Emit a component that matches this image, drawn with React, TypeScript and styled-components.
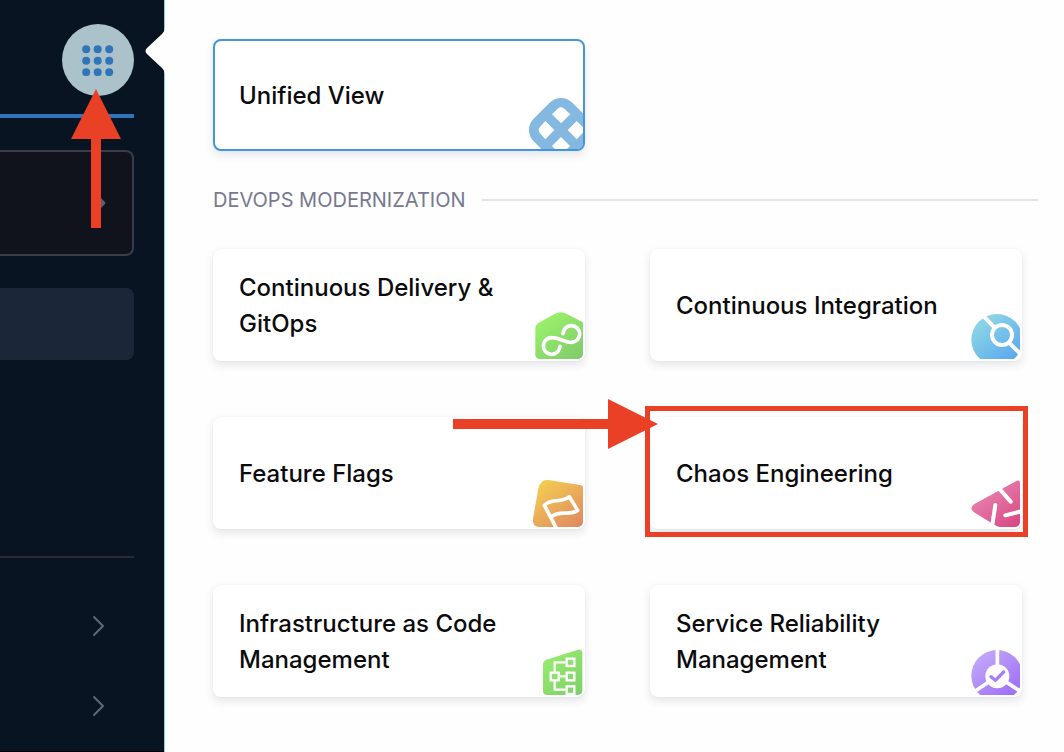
import React from "react";
import styled, { createGlobalStyle } from "styled-components";

const RED = "#ea4026";

const GlobalStyle = createGlobalStyle`
  *, *::before, *::after { box-sizing: border-box; }
  body {
    margin: 0;
    background: #fefefe;
    font-family: Inter, "Liberation Sans", sans-serif;
  }
  button { font: inherit; color: inherit; cursor: pointer; }
`;

const Page = styled.div`
  display: flex;
  height: 100vh;
  overflow: hidden;
`;

const Sidebar = styled.nav`
  flex: 0 0 164px;
  display: flex;
  flex-direction: column;
  padding-right: 30px;
  background: #081421;
  border-bottom: 1px solid #000;
`;

const SidebarHeader = styled.div`
  display: flex;
  justify-content: flex-end;
  padding: 24px 0 18px;
  border-bottom: 4px solid #3075b8;
`;

const ModuleButton = styled.button`
  position: relative;
  width: 72px;
  height: 72px;
  padding: 0;
  border: 0;
  border-radius: 50%;
  background: #abc2ca;
  display: grid;
  place-items: center;
`;

const ProjectButton = styled.button`
  display: flex;
  align-items: center;
  justify-content: flex-end;
  height: 106px;
  margin-top: 32px;
  padding: 0 26px 0 0;
  background: #10131c;
  border: 2px solid #3a3c4a;
  border-left: 0;
  border-radius: 0 8px 8px 0;
`;

const ActiveItem = styled.button`
  height: 72px;
  margin-top: 32px;
  padding: 0;
  border: 0;
  border-radius: 0 8px 8px 0;
  background: #1b2739;
`;

const SetupList = styled.div`
  display: flex;
  flex-direction: column;
  margin-top: 196px;
  padding-top: 28px;
  border-top: 2px solid #2a2b35;
`;

const SetupItem = styled.button`
  display: flex;
  align-items: center;
  justify-content: flex-end;
  height: 80px;
  padding: 0 28px 0 0;
  border: 0;
  background: none;
`;

const Panel = styled.main`
  position: relative;
  flex: 1;
  min-width: 0;
  padding: 39px 26px 0 48px;
  border-left: 1px solid #8fc9e6;
  background: #fefefe;
`;

const PanelTip = styled.svg`
  position: absolute;
  left: -20px;
  top: 28px;
`;

const Grid = styled.div`
  display: grid;
  grid-template-columns: repeat(2, minmax(0, 1fr));
  gap: 56px 65px;
  padding-right: 16px;
`;

const Cell = styled.div`
  position: relative;
`;

const Card = styled.button<{ $selected?: boolean }>`
  position: relative;
  display: flex;
  align-items: center;
  width: 100%;
  height: 112px;
  padding: 2px 48px 0 24px;
  text-align: left;
  font-size: 24px;
  font-weight: 500;
  line-height: 36px;
  color: #0b0b0d;
  background: #fff;
  border: 2px solid ${(p) => (p.$selected ? "#4595de" : "#fff")};
  border-radius: 8px;
  box-shadow: 0 0 2px rgba(40, 41, 61, 0.05), 0 4px 8px rgba(96, 97, 112, 0.16);
`;

const CardIcon = styled.svg`
  position: absolute;
  right: 0;
  bottom: 0;
  width: 56px;
  height: 56px;
  border-bottom-right-radius: 5px;
`;

const SectionTitle = styled.h2`
  display: flex;
  align-items: center;
  gap: 16px;
  margin: 34px 0;
  font-size: 20px;
  font-weight: 400;
  line-height: 30px;
  color: #777990;
  white-space: nowrap;

  &::after {
    content: "";
    flex: 1;
    height: 2px;
    background: #e3e4ea;
  }
`;

const Highlight = styled.div`
  position: absolute;
  inset: -11px -6px -8px -5px;
  border: 5px solid ${RED};
  pointer-events: none;
`;

const ArrowRight = styled.svg`
  position: absolute;
  left: -197px;
  top: -18px;
  pointer-events: none;
`;

const ArrowUp = styled.svg`
  position: absolute;
  left: 9px;
  top: 65px;
  z-index: 1;
  pointer-events: none;
`;

const Chevron = () => (
  <svg width="14" height="22" viewBox="0 0 14 22" fill="none" aria-hidden="true">
    <path d="M2 2l9 9-9 9" stroke="#62657a" strokeWidth="2" strokeLinecap="round" strokeLinejoin="round" />
  </svg>
);

type GradientProps = { id: string; from: string; to: string };
const Gradient = ({ id, from, to }: GradientProps) => (
  <defs>
    <linearGradient id={id} x1="0.1" y1="0" x2="0.9" y2="1">
      <stop offset="0" stopColor={from} />
      <stop offset="1" stopColor={to} />
    </linearGradient>
  </defs>
);

const UnifiedIcon = () => (
  <CardIcon viewBox="51 39 168 168" aria-hidden="true">
    <rect x="71" y="68" width="164" height="164" rx="48" transform="rotate(45 153 150)" fill="#84b8e0" />
    <g fill="#fff">
      <path d="M153 130L126 103L143 86Q153 78 163 86L181 103Z" />
      <path d="M133 150L106 123L90 140Q82 150 90 160L106 178Z" />
      <path d="M173 150L200 123L227 150L200 178Z" />
      <path d="M153 171L126 198L153 225L180 198Z" />
    </g>
  </CardIcon>
);

const DeliveryIcon = () => (
  <CardIcon viewBox="21 9 168 168" aria-hidden="true">
    <Gradient id="cd" from="#9df56b" to="#7fcb6b" />
    <path d="M46 86Q46 74 56 68L108 40Q122 33 136 40L189 67V177H60Q46 177 46 163Z" fill="url(#cd)" />
    <path
      d="M129 101A25 25 0 1 1 155 127C135 127 115 113 97 113A25 25 0 1 0 120 139"
      fill="none"
      stroke="#fff"
      strokeWidth="11"
      strokeLinecap="round"
    />
  </CardIcon>
);

const IntegrationIcon = () => (
  <CardIcon viewBox="12 9 168 168" aria-hidden="true">
    <Gradient id="ci" from="#93dde2" to="#55a2f0" />
    <circle cx="111" cy="119" r="77" fill="url(#ci)" />
    <g fill="none" stroke="#fff" strokeWidth="12">
      <path d="M68 46L105 84M147 128L188 168" />
      <circle cx="126" cy="105" r="30" />
    </g>
  </CardIcon>
);

const FlagsIcon = () => (
  <CardIcon viewBox="21 9 168 168" aria-hidden="true">
    <Gradient id="ff" from="#f5d04f" to="#e08a62" />
    <path d="M55 62Q60 34 85 36L180 51Q189 52 189 58V177H56Q36 175 39 152Z" fill="url(#ff)" />
    <path
      d="M109 180L73 112C95 88 122 108 148 86L173 127C148 146 120 124 93 147"
      fill="none"
      stroke="#fff"
      strokeWidth="11"
      strokeLinejoin="round"
    />
  </CardIcon>
);

const ChaosIcon = () => (
  <CardIcon viewBox="12 9 168 168" aria-hidden="true">
    <Gradient id="ce" from="#eb8db8" to="#d84a85" />
    <path d="M42 109L165 41Q180 33 180 45V177H122Q112 177 104 171L42 133Q26 121 42 109Z" fill="url(#ce)" />
    <path
      d="M116 60L152 101M106 111L97 170M136 142L184 130"
      fill="none"
      stroke="#fff"
      strokeWidth="12"
      strokeLinecap="round"
    />
  </CardIcon>
);

const InfraIcon = () => (
  <CardIcon viewBox="21 9 168 168" aria-hidden="true">
    <Gradient id="iac" from="#98ee6c" to="#80d06c" />
    <path d="M69 86Q69 75 79 71L174 41Q187 38 187 52V165Q187 177 175 177H81Q69 177 69 165Z" fill="url(#iac)" />
    <g fill="none" stroke="#fff" strokeWidth="7">
      <path d="M104 107V79H137M119 121H137M104 136V161H137" />
      <rect x="92" y="110" width="24" height="23" />
      <rect x="140" y="68" width="23" height="22" />
      <rect x="140" y="110" width="23" height="23" />
      <rect x="140" y="151" width="23" height="23" />
    </g>
  </CardIcon>
);

const ReliabilityIcon = () => (
  <CardIcon viewBox="12 9 168 168" aria-hidden="true">
    <Gradient id="srm" from="#c5adfb" to="#9a66f4" />
    <circle cx="111" cy="119" r="77" fill="url(#srm)" />
    <path d="M112 36V121L40 169M112 121L186 169" fill="none" stroke="#fff" strokeWidth="11" />
    <circle cx="112" cy="121" r="36" fill="#fff" />
    <path
      d="M93 122L106 133L131 108"
      fill="none"
      stroke="#a67ff6"
      strokeWidth="10"
      strokeLinecap="round"
      strokeLinejoin="round"
    />
  </CardIcon>
);

const modules = [
  { name: "Continuous Delivery & GitOps", Icon: DeliveryIcon },
  { name: "Continuous Integration", Icon: IntegrationIcon },
  { name: "Feature Flags", Icon: FlagsIcon },
  { name: "Chaos Engineering", Icon: ChaosIcon, highlighted: true },
  { name: "Infrastructure as Code Management", Icon: InfraIcon },
  { name: "Service Reliability Management", Icon: ReliabilityIcon },
];

const dots = [4.5, 16, 27.5];

export default function App() {
  return (
    <Page>
      <GlobalStyle />
      <Sidebar>
        <SidebarHeader>
          <ModuleButton aria-label="Select module">
            <svg width="32" height="32" viewBox="0 0 32 32" fill="#3075b8" aria-hidden="true">
              {dots.map((y) => dots.map((x) => <circle key={`${x}-${y}`} cx={x - 0.3} cy={y + 0.7} r="4" />))}
            </svg>
            <ArrowUp width="50" height="139" viewBox="0 0 50 139" fill={RED} aria-hidden="true">
              <path d="M25 0L50 50H30V139H20V50H0Z" />
            </ArrowUp>
          </ModuleButton>
        </SidebarHeader>
        <ProjectButton aria-label="Select project">
          <svg width="8" height="14" viewBox="0 0 8 14" fill="#5c5f70" aria-hidden="true">
            <path d="M0 0L2 1L7 6Q8 7 7 8L2 13L0 14Z" />
          </svg>
        </ProjectButton>
        <ActiveItem aria-label="Current page" />
        <SetupList>
          <SetupItem aria-label="Project setup">
            <Chevron />
          </SetupItem>
          <SetupItem aria-label="Organization setup">
            <Chevron />
          </SetupItem>
        </SetupList>
      </Sidebar>
      <Panel>
        <PanelTip width="21" height="46" viewBox="0 0 21 46" aria-hidden="true">
          <path d="M21 0H20Q20 3 17 6L2 20Q-1 23 2 26L17 40Q20 43 20 46H21Z" fill="#fefefe" />
        </PanelTip>
        <Grid>
          <Card $selected>
            Unified View
            <UnifiedIcon />
          </Card>
        </Grid>
        <SectionTitle>DEVOPS MODERNIZATION</SectionTitle>
        <Grid>
          {modules.map(({ name, Icon, highlighted }) => (
            <Cell key={name}>
              <Card>
                {name}
                <Icon />
              </Card>
              {highlighted && (
                <>
                  <Highlight />
                  <ArrowRight width="205" height="50" viewBox="0 0 205 50" fill={RED} aria-hidden="true">
                    <path d="M0 20H155V0L205 25L155 50V30H0Z" />
                  </ArrowRight>
                </>
              )}
            </Cell>
          ))}
        </Grid>
      </Panel>
    </Page>
  );
}
